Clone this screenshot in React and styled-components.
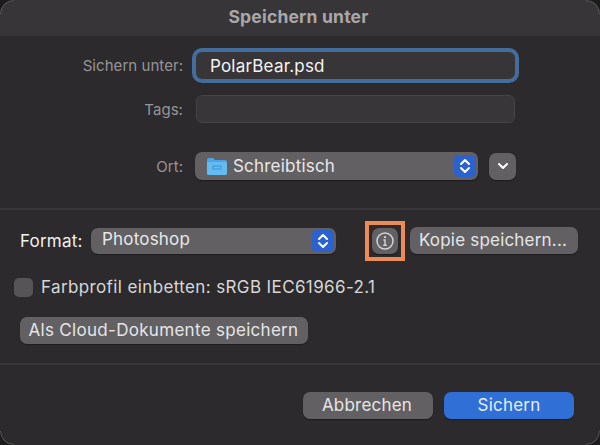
import React from "react";
import styled, { createGlobalStyle } from "styled-components";

const GlobalStyle = createGlobalStyle`
  html, body {
    margin: 0;
    padding: 0;
    background: #1d1c1d;
  }
  * {
    box-sizing: border-box;
  }
`;

const Sheet = styled.div`
  position: relative;
  width: 600px;
  height: 445px;
  overflow: hidden;
  display: flex;
  flex-direction: column;
  background: #2c2a2c;
  border-radius: 14px;
  font-family: Inter, "Noto Sans", "Liberation Sans", sans-serif;
  font-size: 17px;
  letter-spacing: 0.2px;
  color: #e6e5e6;

  /* the thin lighter arc that only shows at the window's corners */
  &::after {
    content: "";
    position: absolute;
    inset: 0;
    border: 1px solid #5a585a;
    border-radius: 14px;
    pointer-events: none;
    mask-image:
      linear-gradient(to right, #000 14px, transparent 14px, transparent 586px, #000 586px),
      linear-gradient(to bottom, #000 14px, transparent 14px, transparent 431px, #000 431px);
    mask-composite: intersect;
  }
`;

const TitleBar = styled.div`
  height: 36px;
  flex: none;
  display: flex;
  align-items: center;
  justify-content: center;
  padding: 0 3px 3px 0;
  background: #383538;
  color: #a9a7a9;
  font-size: 17.5px;
  font-weight: 700;
`;

const Section = styled.div`
  height: ${(p) => p.$height}px;
  flex: none;
  padding: ${(p) => p.$padding};
  border-bottom: ${(p) => (p.$divider ? "2px solid #383638" : "none")};
`;

const Row = styled.div`
  display: flex;
  align-items: center;
  margin-top: ${(p) => p.$top || 0}px;
  margin-left: ${(p) => p.$left || 0}px;
  justify-content: ${(p) => (p.$end ? "flex-end" : "flex-start")};
`;

const FieldLabel = styled.label`
  width: 183px;
  flex: none;
  text-align: right;
  color: #979597;
  font-size: 15px;
  letter-spacing: 0.05px;
`;

const NameField = styled.div`
  width: 327px;
  height: 35px;
  margin-left: 9px;
  display: flex;
  align-items: center;
  padding: 0 14px;
  background: #373537;
  border: 4px solid #426d9c;
  border-radius: 10px;
  color: #f4f4f4;
  font-size: 17px;
`;

const TagsField = styled.div`
  width: 319px;
  height: 28px;
  margin-left: 13px;
  background: #383638;
  border: 1px solid #454345;
  border-radius: 6px;
`;

const Select = styled.div`
  width: ${(p) => p.$width}px;
  height: ${(p) => p.$height}px;
  flex: none;
  margin-left: ${(p) => p.$left || 0}px;
  display: flex;
  align-items: center;
  gap: 6px;
  padding: 0 2px 0 ${(p) => p.$pad}px;
  background: #626062;
  border-radius: 7px;
  box-shadow: 0 1px 1px rgba(0, 0, 0, 0.35);
  color: #e9e8e9;
`;

const SelectText = styled.span`
  flex: 1;
  padding-bottom: ${(p) => p.$lift || 0}px;
`;

const Stepper = styled.span`
  width: 22px;
  height: 22px;
  flex: none;
  display: flex;
  align-items: center;
  justify-content: center;
  background: #2b62d0;
  border-radius: 5px;
`;

const IconButton = styled.button`
  width: ${(p) => p.$size}px;
  height: ${(p) => p.$size}px;
  flex: none;
  margin-left: ${(p) => p.$left || 0}px;
  padding: 0;
  display: flex;
  align-items: center;
  justify-content: center;
  background: #626062;
  border: none;
  border-radius: 7px;
  box-shadow: 0 1px 1px rgba(0, 0, 0, 0.35);
`;

const Highlight = styled.div`
  position: relative;
  margin-left: 36px;
  &::after {
    content: "";
    position: absolute;
    inset: -7px;
    border: 4px solid #ed8b57;
  }
`;

const Button = styled.button`
  width: ${(p) => p.$width}px;
  height: 27px;
  flex: none;
  margin-left: ${(p) => p.$left || 0}px;
  padding: 0 ${(p) => p.$shift || 0}px 1px 0;
  background: ${(p) => (p.$primary ? "#2f6fd6" : "#626062")};
  border: none;
  border-radius: 7px;
  box-shadow: 0 1px 1px rgba(0, 0, 0, 0.35);
  color: ${(p) => (p.$primary ? "#e4edfb" : "#e6e5e6")};
  font-family: inherit;
  font-size: 17px;
  letter-spacing: ${(p) => p.$spacing || 0.2}px;
`;

const FormatLabel = styled.span`
  width: 71px;
  flex: none;
  color: #f0f0f0;
`;

const Checkbox = styled.span`
  width: 19px;
  height: 19px;
  flex: none;
  background: #565456;
  border-radius: 5px;
`;

const CheckLabel = styled.span`
  margin-left: 8px;
  color: #d8d7d8;
  letter-spacing: 0.38px;
`;

const Chevrons = () => (
  <svg width="12" height="18" viewBox="0 0 12 18" fill="none" stroke="#fff" strokeWidth="2" strokeLinecap="round" strokeLinejoin="round">
    <path d="M2 7l4-4 4 4" />
    <path d="M2 11l4 4 4-4" />
  </svg>
);

const FolderIcon = () => (
  <svg width="20" height="18" viewBox="0 0 20 18">
    <path d="M0 3a2 2 0 0 1 2-2h4l2 2h10a2 2 0 0 1 2 2v11a2 2 0 0 1-2 2H2a2 2 0 0 1-2-2z" fill="#4aa5e6" />
    <path d="M0 6a1 1 0 0 1 1-1h18a1 1 0 0 1 1 1v10a2 2 0 0 1-2 2H2a2 2 0 0 1-2-2z" fill="#63bbf2" />
    <rect x="6" y="9" width="8" height="3" fill="none" stroke="#3f94d6" strokeWidth="1" />
  </svg>
);

const InfoIcon = () => (
  <svg width="20" height="20" viewBox="0 0 20 20" fill="none">
    <circle cx="10" cy="10" r="8" stroke="#d4d3d4" strokeWidth="1.5" />
    <circle cx="10" cy="6.2" r="1.1" fill="#d4d3d4" />
    <path d="M8.4 9h1.6v5M8.2 14.2h3.6" stroke="#d4d3d4" strokeWidth="1.4" />
  </svg>
);

const ChevronDown = () => (
  <svg width="12" height="8" viewBox="0 0 12 8" fill="none" stroke="#fff" strokeWidth="2" strokeLinecap="round" strokeLinejoin="round">
    <path d="M2 2l4 4 4-4" />
  </svg>
);

export default function App() {
  return (
    <>
      <GlobalStyle />
      <Sheet>
        <TitleBar>Speichern unter</TitleBar>
        <Section $height={174} $padding="12px 0 0" $divider>
          <Row>
            <FieldLabel>Sichern unter:</FieldLabel>
            <NameField>PolarBear.psd</NameField>
          </Row>
          <Row $top={12}>
            <FieldLabel>Tags:</FieldLabel>
            <TagsField />
          </Row>
          <Row $top={29}>
            <FieldLabel>Ort:</FieldLabel>
            <Select $width={283} $height={28} $left={12} $pad={12}>
              <FolderIcon />
              <SelectText>Schreibtisch</SelectText>
              <Stepper>
                <Chevrons />
              </Stepper>
            </Select>
            <IconButton $size={27} $left={11}>
              <ChevronDown />
            </IconButton>
          </Row>
        </Section>
        <Section $height={155} $padding="17px 0 0 20px" $divider>
          <Row>
            <FormatLabel>Format:</FormatLabel>
            <Select $width={245} $height={26} $pad={11}>
              <SelectText $lift={3}>Photoshop</SelectText>
              <Stepper>
                <Chevrons />
              </Stepper>
            </Select>
            <Highlight>
              <IconButton $size={26}>
                <InfoIcon />
              </IconButton>
            </Highlight>
            <Button $width={168} $left={12} $shift={2}>Kopie speichern...</Button>
          </Row>
          <Row $top={23} $left={-6}>
            <Checkbox />
            <CheckLabel>Farbprofil einbetten: sRGB IEC61966-2.1</CheckLabel>
          </Row>
          <Row $top={20}>
            <Button $width={288} $spacing={0.3} $shift={1}>Als Cloud-Dokumente speichern</Button>
          </Row>
        </Section>
        <Section $height={80} $padding="27px 26px 0 0">
          <Row $end>
            <Button $width={130} $shift={2}>Abbrechen</Button>
            <Button $width={130} $left={11} $primary>Sichern</Button>
          </Row>
        </Section>
      </Sheet>
    </>
  );
}
